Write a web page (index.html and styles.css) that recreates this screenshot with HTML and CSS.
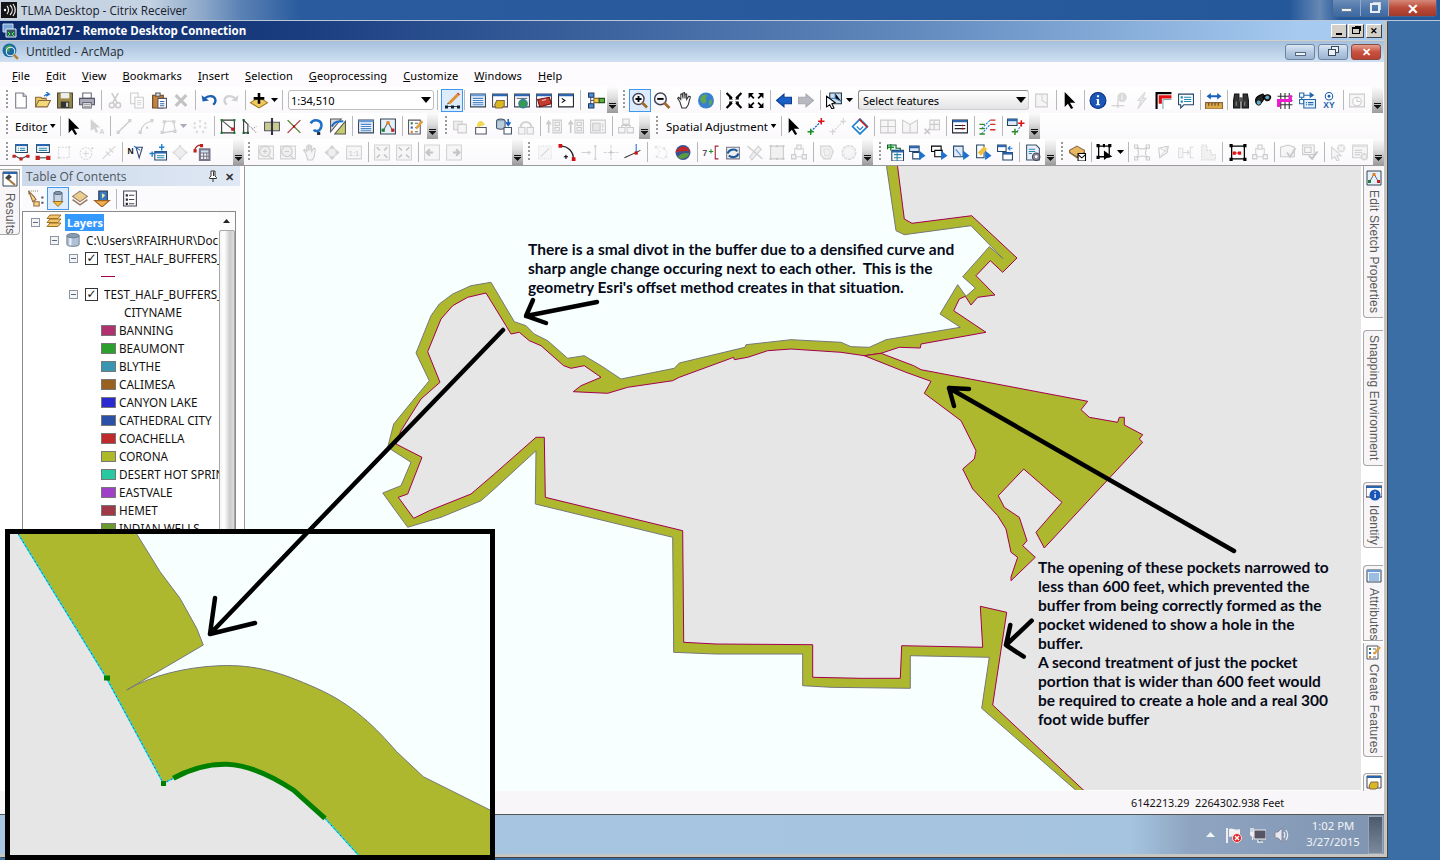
FILE: index.html
```html
<!DOCTYPE html>
<html lang="en">
<head>
<meta charset="utf-8">
<title>TLMA Desktop - Citrix Receiver</title>
<link rel="stylesheet" href="styles.css">
</head>
<body>
<svg class="sprite" aria-hidden="true">
<symbol id="new" viewBox="0 0 16 16"><path d="M3 1h7l3 3v11H3z" fill="#fff" stroke="#778"/><path d="M10 1v3h3" fill="#dde" stroke="#778"/></symbol>
<symbol id="open" viewBox="0 0 16 16"><path d="M1 14V5h5l1 1h4v2" fill="#e8c860" stroke="#864"/><path d="M1 14l3-6h11l-3 6z" fill="#f4d878" stroke="#864"/><path d="M9 4c1-2 3-2 4-2M11 0l3 2-3 2" fill="none" stroke="#27c" stroke-width="1.3"/></symbol>
<symbol id="save" viewBox="0 0 16 16"><path d="M1 1h14v14H1z" fill="#9a8a4a" stroke="#443"/><path d="M4 1h8v5H4z" fill="#eee"/><path d="M4 9h8v6H4z" fill="#333"/><path d="M9 10h2v4H9z" fill="#ccc"/></symbol>
<symbol id="print" viewBox="0 0 16 16"><path d="M4 1h8v5H4z" fill="#fff" stroke="#667"/><path d="M1 6h14v6H1z" fill="#aab" stroke="#556"/><path d="M4 10h8v5H4z" fill="#fff" stroke="#667"/><path d="M5 12h6M5 14h6" stroke="#888"/></symbol>
<symbol id="cut" viewBox="0 0 16 16"><path d="M5 1l5 9M11 1l-5 9" stroke="#889" stroke-width="1.5"/><circle cx="5" cy="12.5" r="2.3" fill="none" stroke="#889" stroke-width="1.4"/><circle cx="11" cy="12.5" r="2.3" fill="none" stroke="#889" stroke-width="1.4"/></symbol>
<symbol id="copy" viewBox="0 0 16 16"><path d="M2 1h7v10H2z" fill="#fff" stroke="#889"/><path d="M6 5h8v10H6z" fill="#fff" stroke="#889"/><path d="M8 8h4M8 10h4M8 12h4" stroke="#aab"/></symbol>
<symbol id="paste" viewBox="0 0 16 16"><path d="M2 3h10v12H2z" fill="#c8803a" stroke="#642"/><path d="M5 1h4v3H5z" fill="#ddd" stroke="#555"/><path d="M7 6h8v9H7z" fill="#fff" stroke="#556"/><path d="M9 9h4M9 11h4M9 13h4" stroke="#36a"/></symbol>
<symbol id="del" viewBox="0 0 16 16"><path d="M3 3l10 10M13 3L3 13" stroke="#778" stroke-width="3"/></symbol>
<symbol id="undo" viewBox="0 0 16 16"><path d="M4 6c3-3 9-3 10 1 .5 2-1 4-2 5" fill="none" stroke="#1d5fb0" stroke-width="2.2"/><path d="M1 3l1 6 6-1z" fill="#1d5fb0"/></symbol>
<symbol id="redo" viewBox="0 0 16 16"><path d="M12 6C9 3 3 3 2 7c-.5 2 1 4 2 5" fill="none" stroke="#99a" stroke-width="2.2"/><path d="M15 3l-1 6-6-1z" fill="#99a"/></symbol>
<symbol id="add" viewBox="0 0 16 16"><path d="M8 5l8 5-8 5-8-5z" fill="#f0c860" stroke="#a07820"/><path d="M8 1v10M3 6h10" stroke="#000" stroke-width="2.4"/></symbol>
<symbol id="sketch" viewBox="0 0 16 16"><path d="M2 14h12" stroke="#345"/><path d="M1 13h3v3H1zM7 13h3v3H7zM13 13h3v3h-3z" fill="#123"/><path d="M5 11L14 2" stroke="#e09030" stroke-width="3"/><path d="M14 2l1-1" stroke="#c33" stroke-width="3"/><path d="M4 10l1 1-2 1z" fill="#333"/></symbol>
<symbol id="table" viewBox="0 0 16 16"><path d="M1 2h14v12H1z" fill="#eef5fc" stroke="#345"/><path d="M1 2h14v2H1z" fill="#6b9bd4"/><path d="M3 6h10M3 8h10M3 10h10M3 12h10" stroke="#4a86c8"/></symbol>
<symbol id="catalog" viewBox="0 0 16 16"><path d="M1 2h14v12H1z" fill="#fff" stroke="#445"/><path d="M1 2h14v2H1z" fill="#2a66b0"/><path d="M5 8h7v5l-2 2H4l-1-3z" fill="#d8b820" stroke="#864"/></symbol>
<symbol id="search" viewBox="0 0 16 16"><path d="M1 2h14v12H1z" fill="#fff" stroke="#445"/><path d="M1 2h14v2H1z" fill="#2a66b0"/><path d="M3 6h10" stroke="#667"/><circle cx="9" cy="11" r="4" fill="#3a9a50" stroke="#27a"/></symbol>
<symbol id="toolbox" viewBox="0 0 16 16"><path d="M1 2h14v12H1z" fill="#fff" stroke="#445"/><path d="M1 2h14v2H1z" fill="#2a66b0"/><path d="M2 7l11-2 2 6-11 3z" fill="#c43c30" stroke="#711"/><path d="M6 8l4-1" stroke="#fcc"/></symbol>
<symbol id="python" viewBox="0 0 16 16"><path d="M1 2h14v12H1z" fill="#fff" stroke="#223"/><path d="M1 2h14v2H1z" fill="#2a66b0"/><path d="M4 6l3 2-3 2" fill="none" stroke="#000"/></symbol>
<symbol id="model" viewBox="0 0 16 16"><path d="M3 4v8M3 8h6M3 4h3M3 12h3M11 8h2" stroke="#557"/><path d="M1 1h5v4H1z" fill="#4a90d8" stroke="#235"/><path d="M1 11h5v4H1z" fill="#4a90d8" stroke="#235"/><path d="M6 6h5v4H6z" fill="#f0d040" stroke="#863"/><path d="M11 6h5v4h-5z" fill="#60b040" stroke="#252"/></symbol>
<symbol id="zoomin" viewBox="0 0 16 16"><circle cx="6.5" cy="6.5" r="5.5" fill="#f4f8fc" stroke="#445" stroke-width="1.4"/><path d="M10 10l5 5" stroke="#a06828" stroke-width="2.6"/><path d="M6.5 3.5v6M3.5 6.5h6" stroke="#000" stroke-width="1.8"/></symbol>
<symbol id="zoomout" viewBox="0 0 16 16"><circle cx="6.5" cy="6.5" r="5.5" fill="#f4f8fc" stroke="#445" stroke-width="1.4"/><path d="M10 10l5 5" stroke="#a06828" stroke-width="2.6"/><path d="M3.5 6.5h6" stroke="#000" stroke-width="1.8"/></symbol>
<symbol id="pan" viewBox="0 0 16 16"><path d="M4 9L2 6l1-1 2 2V2l1.500-.5L7 6V1l1.500-.5L9 6V2l1.500 0V7l2-3 1.500.5L12 12l-2 3H6z" fill="#fff" stroke="#333"/></symbol>
<symbol id="globe" viewBox="0 0 16 16"><circle cx="8" cy="8" r="7.500" fill="#3a80d0"/><path d="M3 5c2-3 5-3 6-2 0 2-2 2-1 4 1 1 0 3-2 4-2-1-4-3-3-6zM11 8l3-1c0 3-1 5-3 6z" fill="#60a848"/></symbol>
<symbol id="fixin" viewBox="0 0 16 16"><path d="M1 1l5 5M15 1l-5 5M1 15l5-5M15 15l-5-5" stroke="#000" stroke-width="2"/><path d="M7 7H3.500V3.500zM9 7h3.500V3.500zM7 9H3.500v3.500zM9 9h3.500v3.500z" fill="#000"/></symbol>
<symbol id="fixout" viewBox="0 0 16 16"><path d="M3 3l3 3M13 3l-3 3M3 13l3-3M13 13l-3-3" stroke="#000" stroke-width="1.600"/><path d="M1 1h5L1 6zM15 1h-5l5 5zM1 15h5l-5-5zM15 15h-5l5-5z" fill="#000"/></symbol>
<symbol id="back" viewBox="0 0 16 16"><path d="M1 8l7-6v3h7v6H8v3z" fill="#1860c8" stroke="#0a3a90"/></symbol>
<symbol id="fwd" viewBox="0 0 16 16"><path d="M15 8L8 2v3H1v6h7v3z" fill="#b8b8c0" stroke="#a8a8b0"/></symbol>
<symbol id="selfeat" viewBox="0 0 16 16"><path d="M4 1h11v10H4z" fill="#cde" stroke="#234"/><path d="M9 1v5l6 3M4 6l5 0" stroke="#4a8ac8"/><path d="M1 4l8 6-3 1 2 4-2 1-2-4-3 2z" fill="#fff" stroke="#000"/></symbol>
<symbol id="poly" viewBox="0 0 16 16"><path d="M2 2h11v12H2z" fill="#eee" stroke="#889"/><path d="M8 2v6l5 3" stroke="#99a" fill="none"/></symbol>
<symbol id="arrow" viewBox="0 0 16 16"><path d="M3 0v14l3-3 3 5 2-1-3-5h5z" fill="#000"/></symbol>
<symbol id="info" viewBox="0 0 16 16"><circle cx="8" cy="8" r="7.500" fill="#1a56b8" stroke="#0d3080"/><path d="M7 3h2v2H7zM6.500 6.500H9v5h1v1H6v-1h1V7.500h-.5z" fill="#fff"/></symbol>
<symbol id="idpt" viewBox="0 0 16 16"><path d="M0 13h12M6 7v8" stroke="#889"/><circle cx="10" cy="5" r="4.500" fill="#aab"/><path d="M9.500 2h1v1h-1zM9.500 4h1v3h-1z" fill="#fff"/></symbol>
<symbol id="bolt" viewBox="0 0 16 16"><path d="M11 0L4 8h3l-3 8 8-10H9z" fill="#c8c8d0" stroke="#aab"/></symbol>
<symbol id="layout" viewBox="0 0 16 16"><path d="M0 0h15v2H2v14H0z" fill="#000"/><path d="M3 3h12v3H6v5H3z" fill="#e01010"/><path d="M7 7h8M7 7v9" stroke="#7ab"/><path d="M8 8h7v8H8z" fill="#fff"/></symbol>
<symbol id="bubble" viewBox="0 0 16 16"><path d="M1 2h14v10H6l-3 3v-3H1z" fill="#fff" stroke="#246"/><path d="M3 4h2v2H3zM3 8h2v2H3z" fill="#28a"/><path d="M6 5h7M6 7h7M6 9h7" stroke="#28a"/></symbol>
<symbol id="measure" viewBox="0 0 16 16"><path d="M0 10h16v6H0z" fill="#d8a848" stroke="#864"/><path d="M3 10v3M6 10v3M9 10v3M12 10v3" stroke="#642"/><path d="M1 4l4-3v2h6V1l4 3-4 3V5H5v2z" fill="#1860b8"/></symbol>
<symbol id="find" viewBox="0 0 16 16"><path d="M2 2h4v4l1 3v6H1V8zM10 2h4l1 6v7H9V9l1-3z" fill="#333" stroke="#111"/><path d="M6 5h4v4H6z" fill="#555"/><path d="M3 9h1v4H3zM11 9h1v4h-1z" fill="#889"/></symbol>
<symbol id="binoc" viewBox="0 0 16 16"><path d="M1 8c0-4 4-5 7-6l2 3-2 3-3 4c-2 1-4-1-4-4zM8 5c2-3 6-3 7-1 1 3-2 5-4 4z" fill="#222" stroke="#000"/><circle cx="4" cy="10" r="2" fill="#6ac"/><circle cx="12" cy="5" r="1.800" fill="#6ac"/></symbol>
<symbol id="grid" viewBox="0 0 16 16"><path d="M1 4h14M1 8h14M1 12h14M4 1v15M8 1v15M12 1v15" stroke="#333"/><path d="M2 14V8h11V3" fill="none" stroke="#f018d0" stroke-width="3"/></symbol>
<symbol id="move" viewBox="0 0 16 16"><path d="M3 3v6M3 3h8M11 1l3 2-3 2z" stroke="#26a" fill="#26a"/><path d="M1 1h4v4H1zM1 7h4v4H1z" fill="#fff" stroke="#26a"/><path d="M5 7h11v8H5z" fill="#e4f0fa" stroke="#26a"/><path d="M7 10h1M9 10h5M7 12h1M9 12h5" stroke="#26a"/></symbol>
<symbol id="xy" viewBox="0 0 16 16"><circle cx="8" cy="4" r="3.500" fill="#fff" stroke="#1a5cb0"/><circle cx="8" cy="4" r="1.300" fill="#1a5cb0"/><text x="8" y="15" text-anchor="middle" font-family="Liberation Sans" font-size="8" font-weight="700" fill="#1a5cb0">XY</text></symbol>
<symbol id="clock" viewBox="0 0 16 16"><path d="M1 2h14v12H1z" fill="#eee" stroke="#889"/><circle cx="8" cy="9" r="4" fill="#fff" stroke="#889"/><path d="M8 6v3h3" stroke="#889" fill="none"/></symbol>
<symbol id="annot" viewBox="0 0 16 16"><path d="M3 1v11l3-2 2 4 2-1-2-4h4z" fill="#99a"/><text x="11" y="15" font-family="Liberation Sans" font-size="7" font-weight="700" fill="#99a">A</text></symbol>
<symbol id="line" viewBox="0 0 16 16"><path d="M3 13L13 3" stroke="#889" stroke-width="1.300"/><path d="M1 12h3v3H1zM12 1h3v3h-3z" fill="#99a"/></symbol>
<symbol id="curve" viewBox="0 0 16 16"><path d="M3 13C4 6 8 4 13 3" stroke="#889" fill="none"/><path d="M1 12h3v3H1zM12 1h3v3h-3zM8 8h2v2H8z" fill="#99a"/></symbol>
<symbol id="polyg" viewBox="0 0 16 16"><path d="M5 3h8l2 9-12 2z" fill="none" stroke="#889"/><path d="M3 2h3v3H3zM12 2h3v3h-3zM1 12h3v3H1zM13 11h3v3h-3z" fill="#99a"/></symbol>
<symbol id="verts" viewBox="0 0 16 16"><path d="M2 4h2v2H2zM7 2h2v2H7zM12 4h2v2h-2zM2 8h2v2H2zM7 7h2v2H7zM12 8h2v2h-2zM4 12h2v2H4zM10 12h2v2h-2z" fill="#aab"/></symbol>
<symbol id="snapa" viewBox="0 0 16 16"><path d="M2 2h12v12H2z" fill="none" stroke="#333"/><path d="M2 2l12 10" stroke="#555"/><path d="M1 1h2v2H1zM13 1h2v2h-2zM1 13h2v2H1zM13 13h2v2h-2z" fill="#1a8030"/><path d="M11 9h3v3h-3z" fill="#c02020"/></symbol>
<symbol id="snapb" viewBox="0 0 16 16"><path d="M2 2l4 4v8H2z" fill="none" stroke="#333"/><path d="M6 6l8 8M6 6h2M10 10l4-2" stroke="#999" stroke-dasharray="1 1"/><path d="M1 1h2v2H1zM1 13h2v2H1zM5 13h2v2H5z" fill="#1a6030"/></symbol>
<symbol id="split" viewBox="0 0 16 16"><path d="M1 4h14v8H1z" fill="#c8cc90" stroke="#556"/><path d="M8 0v16" stroke="#334" stroke-width="2"/></symbol>
<symbol id="cross" viewBox="0 0 16 16"><path d="M2 2l12 12" stroke="#5a8030" stroke-width="1.300"/><path d="M14 2L2 14" stroke="#b04040" stroke-width="1.300"/><path d="M7 7h2v2H7z" fill="#c00"/></symbol>
<symbol id="rotate" viewBox="0 0 16 16"><path d="M3 5c3-5 11-3 10 3-1 5-6 5-7 3" fill="none" stroke="#1c70c8" stroke-width="2.400"/><path d="M9 13h3v3H9z" fill="#234"/></symbol>
<symbol id="trace" viewBox="0 0 16 16"><path d="M1 1h10L1 13z" fill="#ddd" stroke="#555"/><path d="M15 15H5l10-12z" fill="#c8cc70" stroke="#555"/><path d="M2 8c3-5 6-5 11-5" stroke="#1c70c8" stroke-width="2" fill="none"/></symbol>
<symbol id="sprops" viewBox="0 0 16 16"><path d="M1 1h14v14H1z" fill="#e6f0fa" stroke="#345"/><path d="M4 11L8 4l4 7" fill="none" stroke="#666"/><path d="M6.500 3h3v3h-3z" fill="#e08020"/><path d="M2 10h3v3H2z" fill="#1a8030"/><path d="M11 10h3v3h-3z" fill="#c02020"/></symbol>
<symbol id="create" viewBox="0 0 16 16"><path d="M1 2h11v13H1z" fill="#fff" stroke="#556"/><path d="M3 4h2v2H3z" fill="#2a8040"/><path d="M3 8h2v2H3z" fill="#2a60b0"/><path d="M3 12h2v2H3z" fill="#d08020"/><path d="M7 5h3M7 9h3M7 13h3" stroke="#666"/><path d="M8 10l6-7" stroke="#e0a040" stroke-width="2.400"/></symbol>
<symbol id="gbox" viewBox="0 0 16 16"><path d="M2 3h8v8H2z" fill="#ddd" stroke="#889"/><path d="M6 6h8v8H6z" fill="#eee" stroke="#889"/></symbol>
<symbol id="ystar" viewBox="0 0 16 16"><path d="M2 9h10v6H2z" fill="#fff" stroke="#556"/><path d="M4 9c-2-3 1-7 4-6l3 3z" fill="#f0d850"/></symbol>
<symbol id="dbadd" viewBox="0 0 16 16"><ellipse cx="5" cy="3" rx="4" ry="2" fill="#8ab" stroke="#456"/><path d="M1 3v6c0 2 8 2 8 0V3" fill="#bcd" stroke="#456"/><path d="M8 9h7v6H8z" fill="#fff" stroke="#456"/><path d="M12 1v5M10 4l2 3 2-3" stroke="#1c60c0" fill="none" stroke-width="1.500"/></symbol>
<symbol id="g2" viewBox="0 0 16 16"><path d="M1 9h6v6H1zM9 9h6v6H9z" fill="#eee" stroke="#889"/><path d="M3 9c0-7 10-7 10 0" fill="none" stroke="#99a" stroke-width="2"/></symbol>
<symbol id="g3" viewBox="0 0 16 16"><path d="M7 2h8v12H7z" fill="#eee" stroke="#889"/><path d="M3 14V3M1 6l2-3 2 3" stroke="#889" fill="none" stroke-width="1.600"/><path d="M9 4h4v3H9zM9 9h4v3H9z" fill="none" stroke="#889"/></symbol>
<symbol id="g4" viewBox="0 0 16 16"><path d="M1 2h14v12H1z" fill="#eee" stroke="#889"/><path d="M3 5h7v7H3z" fill="#ccc" stroke="#889"/><path d="M12 5h1v4h-1zM12 10h1v2h-1z" fill="#889"/></symbol>
<symbol id="g5" viewBox="0 0 16 16"><path d="M5 1h6v5H5zM1 9h6v5H1zM9 9h6v5H9z" fill="#eee" stroke="#889"/><path d="M8 6v3M4 9V7h8v2" stroke="#889" fill="none"/></symbol>
<symbol id="adjust" viewBox="0 0 16 16"><path d="M3 13L13 3" stroke="#1c70d0" stroke-width="1.200" stroke-dasharray="2 1"/><path d="M0 13h6M3 10v6" stroke="#1a9020" stroke-width="1.400"/><path d="M10 3h6M13 0v6" stroke="#e01010" stroke-width="1.400"/></symbol>
<symbol id="adj2" viewBox="0 0 16 16"><path d="M3 13L13 3" stroke="#99a" stroke-dasharray="2 1"/><path d="M0 13h6M3 10v6M10 3h6M13 0v6" stroke="#99a"/></symbol>
<symbol id="adj3" viewBox="0 0 16 16"><path d="M1 8l7-7 7 7-7 7z" fill="#fff" stroke="#1c80d0" stroke-width="1.600"/><path d="M7 1l8 8" stroke="#e01010" stroke-width="1.400"/><path d="M5 8l3 3 3-3" stroke="#1c80d0" fill="none"/></symbol>
<symbol id="win4" viewBox="0 0 16 16"><path d="M1 2h14v12H1zM8 2v12M1 8h14" fill="#eee" stroke="#889"/></symbol>
<symbol id="win5" viewBox="0 0 16 16"><path d="M1 2l7 4 7-4v12H1zM8 6v8" fill="#eee" stroke="#889"/></symbol>
<symbol id="win6" viewBox="0 0 16 16"><path d="M6 2h9v9H6zM10 2v9M6 6h9" fill="#eee" stroke="#889"/><path d="M1 10l5 5M6 10l-5 5" stroke="#889" stroke-width="1.600"/></symbol>
<symbol id="attrs" viewBox="0 0 16 16"><path d="M1 2h14v12H1z" fill="#fff" stroke="#223"/><path d="M1 2h14v2H1z" fill="#2a66b0"/><path d="M3 7h10M3 10h10" stroke="#223"/><path d="M10 6l2 1-2 1zM10 9l2 1-2 1z" fill="#c00"/></symbol>
<symbol id="lines3" viewBox="0 0 16 16"><path d="M2 15l8-9M2 10l8-8" stroke="#1c80d0" stroke-dasharray="2 1"/><path d="M10 2h5M10 6h5M10 11h5" stroke="#d03020" stroke-width="1.400"/><path d="M0 6h5M0 10h5M0 15h5" stroke="#2a8a20" stroke-width="1.400"/></symbol>
<symbol id="plusw" viewBox="0 0 16 16"><path d="M0 1h9v6H0z" fill="#dfeafa" stroke="#245"/><path d="M0 1h9v2H0z" fill="#2a66b0"/><path d="M9 13L13 6" stroke="#1c80d0" stroke-dasharray="2 1"/><path d="M10 5h6M13 2v6" stroke="#e01010" stroke-width="1.400"/><path d="M4 13h6M7 10v6" stroke="#2a8a20" stroke-width="1.400"/></symbol>
<symbol id="tline" viewBox="0 0 16 16"><path d="M3 0h11v8H3z" fill="#fff" stroke="#246"/><path d="M3 0h11v2H3z" fill="#2a66b0"/><path d="M5 4h1M7 4h5M5 6h1M7 6h5" stroke="#28a"/><path d="M2 11l6 3 6-3" stroke="#444" fill="none"/><path d="M0 10h3v3H0zM6.500 12.500h3v3h-3zM13 10h3v3h-3z" fill="#c02020"/></symbol>
<symbol id="ttwo" viewBox="0 0 16 16"><path d="M2 0h12v8H2z" fill="#fff" stroke="#246"/><path d="M2 0h12v2H2z" fill="#2a66b0"/><path d="M4 4h8M4 6h8" stroke="#28a"/><path d="M3 13h10" stroke="#444"/><path d="M1 11h4v4H1zM11 11h4v4h-4z" fill="#c02020"/></symbol>
<symbol id="g6" viewBox="0 0 16 16"><path d="M2 3h10v10H2z" fill="none" stroke="#aab" stroke-dasharray="2 1"/><path d="M11 2h2v2h-2zM1 12h2v2H1z" fill="#aab"/></symbol>
<symbol id="g7" viewBox="0 0 16 16"><circle cx="7" cy="9" r="5.500" fill="none" stroke="#aab" stroke-dasharray="2 1"/><path d="M7 6v6M4 9h6" stroke="#aab"/><path d="M12 3h2v2h-2z" fill="#aab"/></symbol>
<symbol id="g8" viewBox="0 0 16 16"><path d="M2 14L14 2M5 7l4 4M8 4l4 4" stroke="#aab" stroke-width="1.200"/></symbol>
<symbol id="north" viewBox="0 0 16 16"><text x="0" y="9" font-family="Liberation Sans" font-size="8" font-weight="700" fill="#111">N</text><path d="M8 3h6l-3 10z" fill="#fff" stroke="#346"/><path d="M6 2l6 4" stroke="#1c70c8"/></symbol>
<symbol id="addt" viewBox="0 0 16 16"><path d="M5 7h11v8H5z" fill="#fff" stroke="#246"/><path d="M5 7h11v2H5z" fill="#2a66b0"/><path d="M7 11h7M7 13h7" stroke="#28a"/><path d="M0 9h5M2.500 7v5M9 3h5M11.500 0v6" stroke="#1c80d0" stroke-width="1.300"/></symbol>
<symbol id="dia" viewBox="0 0 16 16"><path d="M8 2l6 6-6 6-6-6z" fill="#ddd" stroke="#aab"/><path d="M7 1h2v2H7zM1 7h2v2H1zM13 7h2v2h-2zM7 13h2v2H7z" fill="#aab"/></symbol>
<symbol id="calc" viewBox="0 0 16 16"><path d="M1 6c1-4 3-5 6-5" fill="none" stroke="#b02020" stroke-width="1.200"/><path d="M0 5h3v3H0zM6 0h3v3H6z" fill="#c02020"/><path d="M5 4h11v12H5z" fill="#778"/><path d="M7 6h7v2H7z" fill="#cde"/><path d="M7 9h2v2H7zM10 9h2v2h-2zM13 9h1v2h-1zM7 12h2v2H7zM10 12h2v2h-2zM13 12h1v2h-1z" fill="#eee"/></symbol>
<symbol id="zb1" viewBox="0 0 16 16"><path d="M1 2h14v12H1z" fill="#eee" stroke="#99a"/><circle cx="7" cy="7" r="5" fill="#ddd" stroke="#889"/><path d="M7 5v4M5 7h4M10 11l4 3" stroke="#889"/></symbol>
<symbol id="zb2" viewBox="0 0 16 16"><path d="M1 2h14v12H1z" fill="#eee" stroke="#99a"/><circle cx="7" cy="7" r="5" fill="#ddd" stroke="#889"/><path d="M5 7h4M10 11l4 3" stroke="#889"/></symbol>
<symbol id="zb3" viewBox="0 0 16 16"><path d="M4 9L2 6l1-1 2 2V2h1.500v4V1H8v5V2h1.500v5l2-3 1.500.5L12 12l-2 3H6z" fill="#eee" stroke="#889"/></symbol>
<symbol id="zb4" viewBox="0 0 16 16"><path d="M8 1l3 3H5zM8 15l3-3H5zM1 8l3-3v6zM15 8l-3-3v6z" fill="#99a"/><circle cx="8" cy="8" r="4" fill="#ddd" stroke="#99a"/></symbol>
<symbol id="zb5" viewBox="0 0 16 16"><path d="M1 2h14v12H1z" fill="#eee" stroke="#99a"/><text x="8" y="11" text-anchor="middle" font-family="Liberation Sans" font-size="7" fill="#778">1:1</text></symbol>
<symbol id="zb6" viewBox="0 0 16 16"><path d="M1 1h14v14H1z" fill="#eee" stroke="#99a"/><path d="M3 3l3 3M13 3l-3 3M3 13l3-3M13 13l-3-3" stroke="#778" stroke-width="1.400"/></symbol>
<symbol id="zb7" viewBox="0 0 16 16"><path d="M1 1h14v14H1z" fill="#eee" stroke="#99a"/><path d="M9 8H3M6 5L3 8l3 3" stroke="#778" stroke-width="2" fill="none"/></symbol>
<symbol id="zb8" viewBox="0 0 16 16"><path d="M1 1h14v14H1z" fill="#eee" stroke="#99a"/><path d="M7 8h6M10 5l3 3-3 3" stroke="#778" stroke-width="2" fill="none"/></symbol>
<symbol id="eb1" viewBox="0 0 16 16"><path d="M2 2h12v12H2z" fill="#f2f2f2" stroke="#bbc" stroke-dasharray="1 1"/><path d="M4 12l8-8" stroke="#aab"/></symbol>
<symbol id="ecurve" viewBox="0 0 16 16"><path d="M2 2c7 0 12 5 12 12" stroke="#222" fill="none" stroke-width="1.300"/><path d="M0 0h3.500v3.500H0zM12.500 12.500H16V16h-3.500z" fill="#d01010"/><path d="M5 12h4M7 10v4" stroke="#000"/></symbol>
<symbol id="e3" viewBox="0 0 16 16"><path d="M1 8h8M14 2v12" stroke="#99a"/><path d="M7 6l3 2-3 2z" fill="#99a"/><path d="M13 1h2v2h-2zM13 13h2v2h-2z" fill="#99a"/></symbol>
<symbol id="e4" viewBox="0 0 16 16"><path d="M8 1v14M1 8h14" stroke="#99a" stroke-dasharray="3 1"/><path d="M7 7h2v2H7z" fill="#778"/></symbol>
<symbol id="eline" viewBox="0 0 16 16"><path d="M0 13l15-7" stroke="#333"/><path d="M11 0v8" stroke="#1c70d0"/><path d="M9.500 7h3v3h-3z" fill="#d01010"/></symbol>
<symbol id="e5" viewBox="0 0 16 16"><path d="M3 2l4 5-3 5 7 2 3-7-6-4z" fill="none" stroke="#bbc" stroke-dasharray="1 1"/><path d="M2 2h2v2H2zM10 3h2v2h-2zM3 11h2v2H3zM12 11h2v2h-2z" fill="#bbc"/></symbol>
<symbol id="ball" viewBox="0 0 16 16"><circle cx="8" cy="8" r="7" fill="#3a5090"/><path d="M1 8C3 2 11 0 15 7 11 6 4 7 1 8z" fill="#c02828"/><path d="M3 12c4-4 8-4 11-3-1 4-8 7-11 3z" fill="#5a9a40"/></symbol>
<symbol id="hist" viewBox="0 0 16 16"><text x="0" y="11" font-family="Liberation Sans" font-size="8" font-weight="700" fill="#555">7</text><path d="M6 7h4M8 5v4" stroke="#1a9020"/><path d="M15 2h-3v12h3" stroke="#a02030" fill="none"/></symbol>
<symbol id="redraw" viewBox="0 0 16 16"><path d="M2 3h12v11H2z" fill="#eee" stroke="#778"/><path d="M3 9c1-4 7-5 9-2M13 9c-1 4-6 4-9 2" stroke="#1c5a9c" stroke-width="2" fill="none"/></symbol>
<symbol id="e6" viewBox="0 0 16 16"><path d="M3 12L11 2l3 3-9 10z" fill="#ddd" stroke="#99a"/><path d="M1 2l14 12" stroke="#99a" stroke-width="1.400"/></symbol>
<symbol id="e7" viewBox="0 0 16 16"><path d="M2 2h12v12H2z" fill="#e4e4e4" stroke="#889"/><path d="M1 1h2v2H1zM13 1h2v2h-2zM1 13h2v2H1zM13 13h2v2h-2zM7 1h2v2H7zM7 13h2v2H7z" fill="#889"/></symbol>
<symbol id="e8" viewBox="0 0 16 16"><path d="M4 4h8v8H4z" fill="none" stroke="#99a"/><path d="M6 1h4v4H6zM1 10h4v4H1zM11 10h4v4h-4z" fill="#eee" stroke="#889"/></symbol>
<symbol id="e9" viewBox="0 0 16 16"><path d="M2 2h9l3 5-3 7H5l-3-4z" fill="#e4e4e4" stroke="#99a"/><path d="M5 5h5l1 3-1 3H6z" fill="none" stroke="#bbb"/></symbol>
<symbol id="e10" viewBox="0 0 16 16"><circle cx="8" cy="8" r="6.500" fill="#e4e4e4" stroke="#99a" stroke-dasharray="3 1"/><circle cx="8" cy="8" r="4" fill="#eee"/></symbol>
<symbol id="b1" viewBox="0 0 16 16"><path d="M1 5V1h8v3h4v3" fill="#dfe" stroke="#153"/><path d="M5 6h11v10H5z" fill="#fff" stroke="#246"/><path d="M5 6h11v2H5z" fill="#2a66b0"/><path d="M7 10h7M7 13h7M10 8v8" stroke="#28a"/><path d="M1 3h6M4 0v6" stroke="#1a9020" stroke-width="1.300"/></symbol>
<symbol id="b2" viewBox="0 0 16 16"><path d="M1 2h9v5H1z" fill="#dfeafa" stroke="#246"/><path d="M1 2h9v2H1z" fill="#2a66b0"/><path d="M4 8h7v6H4z" fill="#fff" stroke="#246"/><path d="M10 6l6 5-6 4z" fill="#1c70d0"/></symbol>
<symbol id="b3" viewBox="0 0 16 16"><path d="M1 2h9v5H1z" fill="#fff" stroke="#000"/><path d="M4 6h7v6H4z" fill="#fff" stroke="#000"/><path d="M10 6l6 5-6 4z" fill="#1c70d0"/></symbol>
<symbol id="b4" viewBox="0 0 16 16"><path d="M1 2h9v10H1z" fill="#dfeafa" stroke="#246"/><path d="M3 5l5 6" stroke="#4a8ac8"/><path d="M10 6l6 5-6 4z" fill="#1c70d0"/></symbol>
<symbol id="b5" viewBox="0 0 16 16"><path d="M2 1h7v12H2z" fill="#fff" stroke="#246"/><path d="M3 8l6-6 3 3-6 6z" fill="#f0c040"/><path d="M10 6l6 5-6 4z" fill="#1c70d0"/></symbol>
<symbol id="b6" viewBox="0 0 16 16"><path d="M1 1h8v6H1z" fill="#fff" stroke="#246"/><path d="M1 1h8v2H1z" fill="#2a66b0"/><path d="M6 8h9v7H6z" fill="#fff" stroke="#246"/><path d="M6 8h9v2H6z" fill="#2a66b0"/><path d="M15 4H11M13 2l-2 2 2 2" stroke="#1c70d0" fill="none"/></symbol>
<symbol id="b7" viewBox="0 0 16 16"><path d="M2 1h9l3 3v11H2z" fill="#eef" stroke="#356"/><path d="M4 5h6M4 7h6M4 9h3" stroke="#28a"/><circle cx="11" cy="12" r="3.500" fill="#889" stroke="#445"/><circle cx="11" cy="12" r="1.300" fill="#fff"/></symbol>
<symbol id="stack" viewBox="0 0 16 16"><path d="M8 2l7 4v2l-7 5-7-5V6z" fill="#e8b860" stroke="#864"/><path d="M1 8l7 4 7-4" fill="none" stroke="#864"/><path d="M9 9h7v7H9z" fill="#fff" stroke="#000"/><path d="M9 10l3.500 3 3.500-3" stroke="#000" fill="none"/></symbol>
<symbol id="nodes" viewBox="0 0 16 16"><path d="M2 2h10v10H2z" fill="none" stroke="#000" stroke-width="1.200"/><path d="M0 0h3v3H0zM11 0h3v3h-3zM0 11h3v3H0zM6 0h2v3H6z" fill="#000"/><path d="M7 6v9l3-2 5-1z" fill="#000"/></symbol>
<symbol id="rnodes" viewBox="0 0 16 16"><path d="M2 2h12v12H2z" fill="none" stroke="#000" stroke-width="1.200"/><path d="M0 0h3v3H0zM13 0h3v3h-3zM0 13h3v3H0zM13 13h3v3h-3z" fill="#000"/><path d="M3 7h3v3H3zM8 7h3v3H8z" fill="#e01010"/><path d="M6 8.500h2" stroke="#e01010"/></symbol>
<symbol id="g9" viewBox="0 0 16 16"><path d="M3 3c3 2 7 2 10 0-2 3-2 7 0 10-3-2-7-2-10 0 2-3 2-7 0-10z" fill="none" stroke="#889"/><path d="M1 1h3v3H1zM12 1h3v3h-3zM1 12h3v3H1zM12 12h3v3h-3z" fill="none" stroke="#889"/></symbol>
<symbol id="g10" viewBox="0 0 16 16"><path d="M3 4l9-2-1 6-7 5z" fill="none" stroke="#889"/><path d="M4 4l8 4M12 2L4 13" stroke="#aab"/></symbol>
<symbol id="g11" viewBox="0 0 16 16"><path d="M1 4h4v9H1z" fill="#eee" stroke="#bbb"/><path d="M5 8h6M9 6l2 2-2 2" stroke="#aab" fill="none"/><path d="M15 3h-3v10h3" fill="none" stroke="#aab"/></symbol>
<symbol id="g12" viewBox="0 0 16 16"><path d="M2 1h5v5h4v4h4v5H2z" fill="#e4e4e4" stroke="#aab" stroke-dasharray="2 1"/></symbol>
<symbol id="g13" viewBox="0 0 16 16"><path d="M1 3l7-2 6 2v9H1z" fill="#eee" stroke="#889"/><path d="M7 8l3 4 5-8" fill="none" stroke="#889" stroke-width="1.800"/></symbol>
<symbol id="g14" viewBox="0 0 16 16"><path d="M1 1h11v9H1z" fill="#eee" stroke="#889"/><path d="M3 3h6v5H3z" fill="none" stroke="#889"/><path d="M7 11l3 3 5-7" fill="none" stroke="#778" stroke-width="1.800"/></symbol>
<symbol id="g15" viewBox="0 0 16 16"><path d="M2 3v11l3-2 2 4 2-1-2-4h4z" fill="#eee" stroke="#99a"/><circle cx="11" cy="4" r="4" fill="#bbb"/><path d="M9 2l4 4M13 2l-4 4" stroke="#fff" stroke-width="1.300"/></symbol>
<symbol id="g16" viewBox="0 0 16 16"><path d="M1 1h14v12H1z" fill="#eee" stroke="#99a"/><path d="M1 1h14v2H1z" fill="#bbb"/><path d="M3 6h7M3 8h7M3 10h5" stroke="#99a"/><circle cx="12" cy="12" r="3.500" fill="#aaa"/><path d="M10.500 10.500l3 3M13.500 10.500l-3 3" stroke="#fff"/></symbol>
<symbol id="layers" viewBox="0 0 16 16"><path d="M4 1h11l-3 3.500H1z" fill="#f2c66c" stroke="#a07020"/><path d="M4 5h11l-3 3.500H1z" fill="#f2c66c" stroke="#a07020"/><path d="M4 9h11l-3 3.500H1z" fill="#f2c66c" stroke="#a07020"/></symbol>
<symbol id="db" viewBox="0 0 16 16"><path d="M1 3v10c0 3 14 3 14 0V3z" fill="#b0c0d4" stroke="#678"/><ellipse cx="8" cy="3" rx="7" ry="2.500" fill="#889ab0" stroke="#678"/><path d="M5 6v8" stroke="#e8f0f8" stroke-width="2.500"/></symbol>
<symbol id="tocsel" viewBox="0 0 16 16"><path d="M1 1h9M1 1v4" stroke="#886" stroke-dasharray="1 1"/><path d="M1 1l5 5 2 3-3 2z" fill="#f0d880" stroke="#964"/><path d="M6 11h5v4H6z" fill="#f0d880" stroke="#964"/><path d="M13 6h2v2h-2zM13 11h2v2h-2z" fill="#556"/></symbol>
<symbol id="tocdb" viewBox="0 0 16 16"><path d="M4 2v8c0 2 8 2 8 0V2z" fill="#c8d4e4" stroke="#567"/><ellipse cx="8" cy="2.500" rx="4" ry="1.500" fill="#889ab0" stroke="#567"/><path d="M3 11h10l-5 5z" fill="#eebb44" stroke="#a07020"/></symbol>
<symbol id="toclay" viewBox="0 0 16 16"><path d="M8 1l7 5-7 5-7-5z" fill="#e8cf90" stroke="#976"/><path d="M1 9l7 5 7-5" fill="none" stroke="#976" stroke-width="1.500"/></symbol>
<symbol id="tocvis" viewBox="0 0 16 16"><path d="M5 1h8v9H5z" fill="#3a7ac0" stroke="#234"/><path d="M8 3l3 2-3 3z" fill="#e8f0a0"/><path d="M1 10h14l-7 6z" fill="#f0b050" stroke="#a06020"/></symbol>
<symbol id="toclist" viewBox="0 0 16 16"><path d="M2 1h12v14H2z" fill="#fff" stroke="#445"/><path d="M4 4h2v2H4zM4 8h2v2H4zM4 12h2v2H4z" fill="#223"/><path d="M7 5h5M7 9h5M7 13h5" stroke="#445"/></symbol>
<symbol id="results" viewBox="0 0 16 16"><path d="M1 1h14v14H1z" fill="#fff" stroke="#345"/><path d="M1 1h14v2H1z" fill="#2a66b0"/><path d="M6 8l7 6" stroke="#a8743a" stroke-width="2"/><path d="M3 7l4-4 3 3-4 3z" fill="#444"/></symbol>
<symbol id="identw" viewBox="0 0 16 16"><path d="M0 1h16v11H0z" fill="#fff" stroke="#223"/><path d="M0 1h16v2H0z" fill="#2a66b0"/><circle cx="9" cy="10" r="5.500" fill="#1a56b8"/><path d="M8.500 6.500h1.200v1.500H8.500zM8.500 9h1.200v4H8.500z" fill="#fff"/></symbol>
<symbol id="pin" viewBox="0 0 10 12"><path d="M3 1h4v5l1.500 1.500v1h-7v-1L3 6z" fill="#fff" stroke="#333"/><path d="M5 8.500V12" stroke="#333"/><path d="M5.500 1.500v4.500" stroke="#333"/></symbol>
<symbol id="flag" viewBox="0 0 16 16"><path d="M1 1v15" stroke="#eee" stroke-width="2"/><path d="M3 2c3-2 6 2 11 0v8c-4 2-7-2-11 0z" fill="#f0f0f0"/><circle cx="11" cy="11" r="4.500" fill="#e02828" stroke="#fff" stroke-width=".8"/><path d="M9 9l4 4M13 9l-4 4" stroke="#fff" stroke-width="1.400"/></symbol>
<symbol id="net" viewBox="0 0 16 16"><path d="M4 3h12v9H4z" fill="#556" stroke="#eee"/><path d="M8 13v2h5M1 1v5M3 1v5" stroke="#eee" stroke-width="1.400"/><path d="M0 5h4v3l-1 2v3H2v-3L0 8z" fill="#eee"/></symbol>
<symbol id="spk" viewBox="0 0 16 16"><path d="M1 5h3l4-4v14l-4-4H1z" fill="#e8e8f0" stroke="#889"/><path d="M10 5c1 2 1 4 0 6M12 3c2 3 2 7 0 10" fill="none" stroke="#eee" stroke-width="1.200"/></symbol>
<symbol id="rdp" viewBox="0 0 16 16"><path d="M1 1h10v8H1z" fill="#7aa4d8" stroke="#cde"/><path d="M4 6h10v8H4z" fill="#356" stroke="#def"/><path d="M6 9l2 2-2 2M12 9l-2 2 2 2" stroke="#4f4" fill="none"/></symbol>
<symbol id="cit" viewBox="0 0 16 16"><path d="M0 0h16v16H0z" fill="#141414" rx="2"/><circle cx="4" cy="8" r="1.200" fill="#fff"/><path d="M6 4c2 2 2 6 0 8M9 3c3 3 3 7 0 10M12 2c3 4 3 8 0 12" fill="none" stroke="#eee" stroke-width="1.200"/></symbol>
<symbol id="arcm" viewBox="0 0 16 16"><circle cx="7" cy="7" r="6.500" fill="#1a6aa0"/><path d="M3 4c3-3 6-2 6-1 0 3-3 2-2 5-2 1-4-1-4-4z" fill="#4aa050"/><circle cx="8" cy="8" r="4" fill="none" stroke="#def"/><path d="M11 11l4 4" stroke="#b88030" stroke-width="2.400"/></symbol>
</svg>

<div class="desk">
  <header class="citrix">
    <svg class="tico"><use href="#cit"/></svg>
    <span class="citrix-t">TLMA Desktop - Citrix Receiver</span>
    <div class="citrix-btns">
      <span class="cb"><i class="cb-min"></i></span>
      <span class="cb"><i class="cb-max"></i></span>
      <span class="cb cb-close">&#10005;</span>
    </div>
  </header>

  <div class="rdp">
    <div class="rdp-bar">
      <svg class="tico"><use href="#rdp"/></svg>
      <span class="rdp-t">tlma0217 - Remote Desktop Connection</span>
      <div class="rdp-btns">
        <span class="rb"><i class="rb-min"></i></span>
        <span class="rb"><i class="rb-max"></i></span>
        <span class="rb rb-x">&#10005;</span>
      </div>
    </div>

    <div class="arc-bar">
      <svg class="tico arc-ico"><use href="#arcm"/></svg>
      <span class="arc-t">Untitled - ArcMap</span>
      <div class="arc-btns">
        <span class="ab"><i class="ab-min"></i></span>
        <span class="ab"><i class="ab-max"></i></span>
        <span class="ab ab-x">&#10005;</span>
      </div>
    </div>

    <nav class="menu">
      <span><u>F</u>ile</span><span><u>E</u>dit</span><span><u>V</u>iew</span><span><u>B</u>ookmarks</span><span><u>I</u>nsert</span><span><u>S</u>election</span><span><u>G</u>eoprocessing</span><span><u>C</u>ustomize</span><span><u>W</u>indows</span><span><u>H</u>elp</span>
    </nav>

    <div class="tb">
      <i class="grip"></i>
      <svg class="i"><use href="#new"/></svg><svg class="i"><use href="#open"/></svg><svg class="i"><use href="#save"/></svg><svg class="i"><use href="#print"/></svg><i class="sep"></i>
      <svg class="i d"><use href="#cut"/></svg><svg class="i d"><use href="#copy"/></svg><svg class="i"><use href="#paste"/></svg><svg class="i d"><use href="#del"/></svg><i class="sep"></i>
      <svg class="i"><use href="#undo"/></svg><svg class="i d"><use href="#redo"/></svg><i class="sep"></i>
      <svg class="i"><use href="#add"/></svg><i class="caret"></i><i class="sep"></i>
      <div class="combo m3 scale">1:34,510<i class="cdrop"></i></div><i class="sep"></i>
      <svg class="i a m1"><use href="#sketch"/></svg><i class="sep s5"></i>
      <svg class="i"><use href="#table"/></svg><svg class="i"><use href="#catalog"/></svg><svg class="i"><use href="#search"/></svg><svg class="i"><use href="#toolbox"/></svg><svg class="i"><use href="#python"/></svg><i class="sep"></i>
      <svg class="i m2"><use href="#model"/></svg><i class="dd"></i><i class="grip m3"></i>
      <svg class="i a m2"><use href="#zoomin"/></svg><svg class="i"><use href="#zoomout"/></svg><svg class="i"><use href="#pan"/></svg><svg class="i"><use href="#globe"/></svg><i class="sep"></i>
      <svg class="i"><use href="#fixin"/></svg><svg class="i"><use href="#fixout"/></svg><i class="sep"></i>
      <svg class="i"><use href="#back"/></svg><svg class="i"><use href="#fwd"/></svg><i class="sep"></i>
      <svg class="i"><use href="#selfeat"/></svg><i class="caret"></i>
      <div class="combo sel m4">Select features<i class="cdrop"></i></div>
      <svg class="i d m2"><use href="#poly"/></svg><i class="sep"></i>
      <svg class="i"><use href="#arrow"/></svg><i class="sep"></i>
      <svg class="i"><use href="#info"/></svg><svg class="i d"><use href="#idpt"/></svg><svg class="i d"><use href="#bolt"/></svg><svg class="i"><use href="#layout"/></svg><svg class="i"><use href="#bubble"/></svg><i class="sep"></i>
      <svg class="i"><use href="#measure"/></svg><i class="sep s5"></i>
      <svg class="i"><use href="#find"/></svg><svg class="i"><use href="#binoc"/></svg><svg class="i"><use href="#grid"/></svg><svg class="i"><use href="#move"/></svg><svg class="i"><use href="#xy"/></svg><i class="sep"></i>
      <svg class="i d"><use href="#clock"/></svg><i class="dd m4"></i>
    </div>

    <div class="tb">
      <i class="grip"></i>
      <span class="tb-text editor">Edito<u>r</u><i class="caret"></i></span><i class="sep"></i>
      <svg class="i"><use href="#arrow"/></svg><svg class="i d"><use href="#annot"/></svg><i class="sep"></i>
      <svg class="i d"><use href="#line"/></svg><svg class="i d"><use href="#curve"/></svg><svg class="i d"><use href="#polyg"/></svg><i class="caret g"></i><svg class="i d m1"><use href="#verts"/></svg><i class="sep"></i>
      <svg class="i"><use href="#snapa"/></svg><svg class="i"><use href="#snapb"/></svg><svg class="i"><use href="#split"/></svg><svg class="i"><use href="#cross"/></svg><svg class="i"><use href="#rotate"/></svg><svg class="i"><use href="#trace"/></svg><i class="sep"></i>
      <svg class="i"><use href="#table"/></svg><svg class="i"><use href="#sprops"/></svg><i class="sep"></i>
      <svg class="i"><use href="#create"/></svg><i class="dd"></i><i class="grip m5"></i>
      <svg class="i d"><use href="#gbox"/></svg><svg class="i"><use href="#ystar"/></svg><svg class="i"><use href="#dbadd"/></svg><svg class="i d"><use href="#g2"/></svg><i class="sep"></i>
      <svg class="i d"><use href="#g3"/></svg><svg class="i d"><use href="#g3"/></svg><svg class="i d"><use href="#g4"/></svg><i class="sep"></i>
      <svg class="i d"><use href="#g5"/></svg><i class="dd m2"></i><i class="grip m4"></i>
      <span class="tb-text spatial">Spatial Adjustment<i class="caret"></i></span><i class="sep s4"></i>
      <svg class="i"><use href="#arrow"/></svg><svg class="i"><use href="#adjust"/></svg><svg class="i d"><use href="#adj2"/></svg><svg class="i"><use href="#adj3"/></svg><i class="sep"></i>
      <svg class="i d"><use href="#win4"/></svg><svg class="i d"><use href="#win5"/></svg><svg class="i d"><use href="#win6"/></svg><i class="sep"></i>
      <svg class="i"><use href="#attrs"/></svg><i class="sep"></i>
      <svg class="i"><use href="#lines3"/></svg><i class="sep"></i>
      <svg class="i"><use href="#plusw"/></svg><i class="dd m2"></i>
    </div>

    <div class="tb">
      <i class="grip"></i>
      <svg class="i"><use href="#tline"/></svg><svg class="i"><use href="#ttwo"/></svg><svg class="i d"><use href="#g6"/></svg><svg class="i d"><use href="#g7"/></svg><svg class="i d"><use href="#g8"/></svg><i class="sep s5"></i>
      <svg class="i"><use href="#north"/></svg><svg class="i"><use href="#addt"/></svg><svg class="i d"><use href="#dia"/></svg><svg class="i"><use href="#calc"/></svg>
      <i class="dd m20"></i><i class="grip m2"></i>
      <svg class="i d m3"><use href="#zb1"/></svg><svg class="i d"><use href="#zb2"/></svg><svg class="i d"><use href="#zb3"/></svg><svg class="i d"><use href="#zb4"/></svg><svg class="i d"><use href="#zb5"/></svg><i class="sep"></i>
      <svg class="i d"><use href="#zb6"/></svg><svg class="i d"><use href="#zb6"/></svg><i class="sep"></i>
      <svg class="i d"><use href="#zb7"/></svg><svg class="i d"><use href="#zb8"/></svg>
      <i class="dd m47"></i><i class="grip m3"></i>
      <svg class="i d m2"><use href="#eb1"/></svg><svg class="i"><use href="#ecurve"/></svg><svg class="i d"><use href="#e3"/></svg><svg class="i d"><use href="#e4"/></svg><svg class="i"><use href="#eline"/></svg><i class="sep"></i>
      <svg class="i d"><use href="#e5"/></svg><svg class="i"><use href="#ball"/></svg><i class="sep"></i>
      <svg class="i"><use href="#hist"/></svg><svg class="i"><use href="#redraw"/></svg><svg class="i d"><use href="#e6"/></svg><svg class="i d"><use href="#e7"/></svg><svg class="i d"><use href="#e8"/></svg><i class="sep"></i>
      <svg class="i d"><use href="#e9"/></svg><svg class="i d"><use href="#e10"/></svg><i class="dd m2"></i><i class="grip m4"></i>
      <svg class="i m1"><use href="#b1"/></svg><svg class="i"><use href="#b2"/></svg><svg class="i"><use href="#b3"/></svg><svg class="i"><use href="#b4"/></svg><svg class="i"><use href="#b5"/></svg><svg class="i"><use href="#b6"/></svg><i class="sep"></i>
      <svg class="i"><use href="#b7"/></svg><i class="dd m1"></i><i class="grip m3"></i>
      <svg class="i m1"><use href="#stack"/></svg><i class="sep"></i>
      <svg class="i"><use href="#nodes"/></svg><i class="caret"></i><i class="sep"></i>
      <svg class="i d"><use href="#g9"/></svg><svg class="i d"><use href="#g10"/></svg><svg class="i d"><use href="#g11"/></svg><svg class="i d"><use href="#g12"/></svg><i class="sep"></i>
      <svg class="i m2"><use href="#rnodes"/></svg><svg class="i d"><use href="#e8"/></svg><i class="sep"></i>
      <svg class="i d"><use href="#g13"/></svg><svg class="i d"><use href="#g14"/></svg><i class="sep"></i>
      <svg class="i d"><use href="#g15"/></svg><svg class="i d"><use href="#g16"/></svg><i class="dd m2"></i>
    </div>

    <main class="work">
      <aside class="lefttab">
        <div class="vtab"><svg class="vico"><use href="#results"/></svg><span class="vt">Results</span></div>
      </aside>

      <section class="toc">
        <div class="toc-head"><span>Table Of Contents</span><svg class="toc-pin"><use href="#pin"/></svg><span class="toc-x">&#10005;</span></div>
        <div class="toc-tools">
          <svg class="i"><use href="#tocsel"/></svg><svg class="i a"><use href="#tocdb"/></svg><svg class="i"><use href="#toclay"/></svg><svg class="i"><use href="#tocvis"/></svg><i class="sep"></i><svg class="i"><use href="#toclist"/></svg>
        </div>
        <div class="tree">
          <div class="rows">
            <div class="r r0"><i class="exp"></i><svg class="ri"><use href="#layers"/></svg><b class="lyr">Layers</b></div>
            <div class="r r1"><i class="exp"></i><svg class="ri"><use href="#db"/></svg><span class="clip">C:\Users\RFAIRHUR\Documents\ArcGIS</span></div>
            <div class="r r2"><i class="exp"></i><i class="chk">&#10003;</i><span class="clip">TEST_HALF_BUFFERS_CLIP</span></div>
            <div class="r r3"><i class="leg"></i></div>
            <div class="r r2"><i class="exp"></i><i class="chk">&#10003;</i><span class="clip">TEST_HALF_BUFFERS_CITY</span></div>
            <div class="r r4">CITYNAME</div>
            <div class="r r3"><i class="sw c1"></i>BANNING</div>
            <div class="r r3"><i class="sw c2"></i>BEAUMONT</div>
            <div class="r r3"><i class="sw c3"></i>BLYTHE</div>
            <div class="r r3"><i class="sw c4"></i>CALIMESA</div>
            <div class="r r3"><i class="sw c5"></i>CANYON LAKE</div>
            <div class="r r3"><i class="sw c6"></i>CATHEDRAL CITY</div>
            <div class="r r3"><i class="sw c7"></i>COACHELLA</div>
            <div class="r r3"><i class="sw c8"></i>CORONA</div>
            <div class="r r3"><i class="sw c9"></i><span class="clip">DESERT HOT SPRINGS</span></div>
            <div class="r r3"><i class="sw c10"></i>EASTVALE</div>
            <div class="r r3"><i class="sw c11"></i>HEMET</div>
            <div class="r r3"><i class="sw c12"></i>INDIAN WELLS</div>
          </div>
          <div class="sbar"><span class="sb-up"></span><span class="sb-th"></span></div>
        </div>
      </section>

      <section class="map">
        <svg class="mapsvg" viewBox="244 167 1118 624">
          <polygon class="outer" points="886,160 885.7,168.3 895,231.700 903.300,235.700 970,226.700 1001.700,259.300 988.300,247.700 961.700,277.700 974.300,289 965,297.300 956.700,285.700 939,315 959.300,328.300 885,340.700 868.300,348.300 850,347.700 840,343.300 790,340.700 745,345.700 744,348.300 678.300,364 673.300,369.300 620,380 600,366.700 583.300,356.700 566.700,359.300 546.700,341.700 533.300,335 525,326.700 513.300,322.700 490,283.300 470,286.700 451.700,295 438.300,305 430,316.700 415,354 428.300,381.700 411.700,401.700 392.700,425 386.700,448.300 410,463.300 400,486.700 381.700,494 406.700,528.300 440,518.300 480,501.700 493.300,490 535,451.700 534.300,505 671.700,538.300 672.700,653.300 714.300,655 801.700,655 801.700,686.700 830,688.300 909.300,689.300 909.300,656.700 988.300,658.300 980.700,709.300 1085,800 1370,800 1370,160"/>
          <polygon class="inner" points="896,160 896.700,168.300 903.300,220 911,224.300 970.700,216.700 1016,259 1001.700,273.300 989.300,261.700 975,276.700 994,296 976.700,298.300 970,306 964.300,297.300 958.300,300 952.700,311.700 985,333.300 920,345 919.300,349 898.300,348.300 880,354.300 863.300,356.700 840,353.300 790,350 766.700,351.700 746.700,358.300 733.300,360.700 732.700,358.300 678.300,378.300 671.700,381.700 626.700,388.300 606.700,394.300 572.300,392.700 580,386.700 600,378.300 583.300,366.700 570,369.300 562.700,366.700 540,346.700 528.300,341.700 518.300,333.300 510,335 505,326.700 485,294 466.700,298.300 451.700,306.700 440,320 426.700,352.700 439,383.300 420,400 400,431.700 395,445 421,458.300 406.700,495 397.300,498.300 412.700,519.300 428.300,511.700 470,495 493.300,475 535,438.300 543.300,438.300 544.300,498.300 681.700,531.700 682.700,643.300 715,645 811.700,645.700 811.700,678.300 860,679.300 899.300,679.300 900.700,646.700 981.700,648.300 979.300,607.300 1005.700,613.300 991.700,706 1092,800 1370,800 1370,160"/>
          <polygon class="pocket" points="863.300,356.700 880,354.300 912.700,366.700 920,370.700 1086.700,402.300 1080,410.700 1088.300,418.300 1116.700,423.300 1118.300,418.300 1123.300,418.300 1123.300,426 1141.700,435.700 1138.300,440 1141.700,443.300 1043.300,549 1035,533.300 1061,503.300 1022.700,470 997.300,496.700 1003.300,508.300 1018.300,518.300 1026,541.700 1021.700,546.700 1034.300,558.300 1010,581.700 1010,578 1016.700,558.300 1010,553.300 1005,530 996.700,516.700 971.700,490 961.700,470 973.300,460 975,451.700 960,421.700 923.300,394.300 930,382.300 905,373.300"/>
          <g class="ink">
            <path d="M596 303L525 317M532 301L525 317L545 324"/>
            <path d="M502 331L300 540"/>
            <path d="M1233 552L948 389M968 390L948 389L953 407"/>
            <path d="M1030.700 621.700L1005 646M1009.300 626L1005 646L1022.700 657.700"/>
          </g>
        </svg>
        <div class="note note1">
          <div>There is a smal divot in the buffer due to a densified curve and</div>
          <div>sharp angle change occuring next to each other.  This is the</div>
          <div>geometry Esri's offset method creates in that situation.</div>
        </div>
        <div class="note note2">
          <div>The opening of these pockets narrowed to</div>
          <div>less than 600 feet, which prevented the</div>
          <div>buffer from being correctly formed as the</div>
          <div>pocket widened to show a hole in the</div>
          <div>buffer.</div>
          <div>A second treatment of just the pocket</div>
          <div>portion that is wider than 600 feet would</div>
          <div>be required to create a hole and a real 300</div>
          <div>foot wide buffer</div>
        </div>
      </section>

      <aside class="righttabs">
        <div class="rtab rt1"><svg class="vico"><use href="#sprops"/></svg><span class="vt">Edit Sketch Properties</span></div>
        <div class="rtab rt2"><span class="vt">Snapping Environment</span></div>
        <div class="rtab rt3"><svg class="vico"><use href="#identw"/></svg><span class="vt">Identify</span></div>
        <div class="rtab rt4"><svg class="vico"><use href="#table"/></svg><span class="vt">Attributes</span></div>
        <div class="rtab rt5"><svg class="vico"><use href="#create"/></svg><span class="vt">Create Features</span></div>
        <div class="rtab rt6"><svg class="vico"><use href="#catalog"/></svg></div>
      </aside>
    </main>

    <footer class="status">6142213.29  2264302.938 Feet</footer>

    <div class="taskbar">
      <i class="tray-up"></i>
      <svg class="tr"><use href="#flag"/></svg>
      <svg class="tr"><use href="#net"/></svg>
      <svg class="tr"><use href="#spk"/></svg>
      <div class="clock"><div>1:02 PM</div><div>3/27/2015</div></div>
      <i class="showdesk"></i>
    </div>
  </div>

  <div class="inset">
    <svg class="insetsvg" viewBox="10 534 480 321">
      <path class="i-olive" d="M18.300 534L136.700 534L160 571.700L180 598.300L196.700 628.300L203.300 645L126.700 690C150 676 185 667 220 665.700S280 672 316.700 688.300S376 728 396.700 751.700L423.300 776.700L490 810V855H358.300L163.300 783.300L106.700 678.300Z"/>
      <path class="i-edge" d="M136.700 534L160 571.700L180 598.300L196.700 628.300L203.300 645L126.700 690C150 676 185 667 220 665.700S280 672 316.700 688.300S376 728 396.700 751.700L423.300 776.700L490 810"/>
      <path class="i-gray" d="M18.300 534L106.700 678.300L163.300 783.300L173.300 778.300C190 769 210 764 226.700 764.300C250 765 275 778 293.300 790L325 818.300L358.300 855H10V534Z"/>
      <polyline class="i-cyan" points="18.300,534 106.700,678.300 163.300,783.300 173.300,778.300"/>
      <polyline class="i-cyan" points="325,818.300 358.300,855"/>
      <polyline class="i-mag" points="18.300,534 106.700,678.300 163.300,783.300 173.300,778.300"/>
      <polyline class="i-mag" points="325,818.300 358.300,855"/>
      <path class="i-green" d="M173.300 778.300C190 769 210 764 226.700 764.300C250 765 275 778 293.300 790L325 818.300"/>
      <rect class="i-sq" x="104" y="675.500" width="6" height="5"/>
      <rect class="i-sq" x="161" y="781" width="5" height="5"/>
      <g class="ink">
        <path d="M325 514L210 634M215 598L210 634L255 623"/>
      </g>
    </svg>
  </div>
</div>
</body>
</html>
```

FILE: styles.css
```css
* { box-sizing: border-box; }
html, body { margin: 0; padding: 0; }
body { width: 1440px; height: 860px; overflow: hidden; font-family: "Noto Sans", "Open Sans", sans-serif; font-size: 12px; color: #000; }
i { font-style: normal; }
.sprite { display: none; }

.desk { position: relative; width: 1440px; height: 860px; background: #3a6ea5; overflow: hidden; }

/* Citrix receiver bar */
.citrix { height: 21px; display: flex; align-items: center; padding-left: 1px; background: linear-gradient(90deg, #c9d4e0 0, #c4d2e2 150px, #8aa6c8 205px, #5b82b5 240px, #2a5b9e 300px, #25589b 1290px, #6688b4 1320px, #25589b 1340px); border-bottom: 1px solid #b8c8da; }
.tico { width: 16px; height: 16px; flex: none; }
.citrix-t { margin-left: 4px; font-family: "Open Sans", sans-serif; font-size: 11.700px; color: #16202e; }
.citrix-btns { margin-left: auto; margin-right: 3px; display: flex; align-self: flex-start; height: 17px; border: 1px solid #44688f; border-top: 0; border-radius: 0 0 4px 4px; }
.cb { width: 28px; display: flex; align-items: center; justify-content: center; background: linear-gradient(#6c8db8, #4d76aa 55%, #3f6aa2); border-right: 1px solid #8ea9c9; }
.cb-min { width: 11px; height: 4px; background: #eef3f8; border: 1px solid #6a7f99; margin-top: 4px; }
.cb-max { width: 10px; height: 10px; border: 2px solid #e8eef4; box-shadow: 2px -2px 0 -1px #c8d4e2; }
.cb-close { width: 47px; border-right: 0; color: #fff; font-weight: 700; font-size: 14px; background: linear-gradient(#d68878, #bb4a38 50%, #a03a2c); }

/* Remote desktop frame */
.rdp { width: 1387px; height: 836px; display: flex; flex-direction: column; background: #fff; border-right: 3px solid #c8c6c0; border-bottom: 3px solid #c8c6c0; box-shadow: 1px 1px 0 #444; }
.rdp-bar { height: 20px; flex: none; display: flex; align-items: center; padding-left: 2px; background: linear-gradient(90deg, #0b2a6c 0, #1a3d80 300px, #5f88bc 900px, #a6caf0 1300px); border-bottom: 1px solid #d4d0c8; }
.rdp-t { margin-left: 2px; font-family: "Open Sans", sans-serif; font-weight: 700; font-size: 11.500px; color: #fff; }
.rdp-btns { margin-left: auto; margin-right: 2px; display: flex; gap: 1px; }
.rb { width: 16px; height: 14px; display: flex; align-items: center; justify-content: center; background: #d4d0c8; border: 1px solid; border-color: #fff #404040 #404040 #fff; font-size: 9px; font-weight: 700; color: #000; }
.rb-x { margin-left: 1px; }
.rb-min { width: 6px; height: 2px; background: #000; margin-top: 6px; margin-right: 1px; }
.rb-max { width: 8px; height: 7px; border: 1px solid #000; border-top-width: 2px; box-shadow: 2px -2px 0 -1px #000; }

.arc-bar { height: 21px; flex: none; display: flex; align-items: center; padding-left: 2px; background: linear-gradient(#a6c0dc, #bcd2e8 55%, #d0e0f2); }
.arc-ico { width: 17px; height: 17px; }
.arc-t { margin-left: 7px; font-family: "Open Sans", sans-serif; font-size: 12px; color: #252a30; }
.arc-btns { margin-left: auto; margin-right: 3px; display: flex; gap: 3px; }
.ab { width: 30px; height: 16px; display: flex; align-items: center; justify-content: center; border: 1px solid #6e85a2; border-radius: 3px; background: linear-gradient(#dbe7f4, #b4c9e2 50%, #9db5d3); color: #fff; font-size: 11px; font-weight: 700; }
.ab-x { background: linear-gradient(#e6a293, #c8503f 50%, #b84232); border-color: #8a4a42; }
.ab-min { width: 11px; height: 4px; background: #eef3f8; border: 1px solid #55677e; margin-top: 5px; }
.ab-max { width: 8px; height: 7px; border: 1px solid #39495c; box-shadow: 3px -3px 0 -1px #eef3f8, 3px -3px 0 0 #39495c; background: #eef3f8; margin: 2px 3px 0 0; }

/* Menu + toolbars */
.menu { height: 25px; flex: none; display: flex; gap: 16px; align-items: center; padding: 2px 0 0 12px; background: #fdfbfd; font-family: "Noto Sans", sans-serif; font-size: 11px; letter-spacing: .1px; }
.tb { height: 26px; flex: none; display: flex; align-items: center; padding-left: 4px; background: linear-gradient(#fff, #faf8fb); font-size: 12px; white-space: nowrap; }
.grip { width: 6px; height: 20px; flex: none; background: repeating-linear-gradient(#9a9a9a 0 2px, transparent 2px 4px) 2px 0 / 2px 100% no-repeat; }
.i { width: 22px; height: 17px; flex: none; }
.d { opacity: .42; filter: grayscale(1); }
.a { width: 16px; margin: 0 3px; background: #dcecfc; box-shadow: 0 0 0 2px #dcecfc, 0 0 0 3px #3f97f0; }
.sep { width: 6px; height: 20px; flex: none; background: linear-gradient(#b8b8b8, #b8b8b8) center / 1px 100% no-repeat; }
.s5 { width: 5px; }
.s4 { width: 4px; }
.caret { width: 9px; height: 4px; flex: none; display: inline-block; background: #000; clip-path: polygon(10% 0, 90% 0, 50% 100%); }
.caret.g { background: #aab; }
.dd { width: 11px; height: 26px; flex: none; position: relative; background: linear-gradient(#fbfbfb, #e0e0e0 40%, #9a9a9a); }
.dd::after { content: ""; position: absolute; left: 2px; bottom: 4px; width: 7px; height: 6px; background: linear-gradient(#111 0 1px, transparent 1px 2px, #111 2px); clip-path: polygon(0 0, 100% 0, 100% 40%, 50% 100%, 0 40%); }
.m1 { margin-left: 1px; }
.m2 { margin-left: 2px; }
.m3 { margin-left: 3px; }
.m4 { margin-left: 4px; }
.m5 { margin-left: 5px; }
.m20 { margin-left: 20px; }
.m47 { margin-left: 47px; }
.a.m1 { margin-left: 4px; margin-right: 2px; }
.a.m2 { margin-left: 5px; margin-right: 3px; }
.combo { height: 20px; flex: none; display: flex; align-items: center; position: relative; border: 1px solid #bdbdbd; border-radius: 3px; font-family: "Noto Sans", sans-serif; font-size: 11px; }
.scale { width: 146px; padding-left: 2px; background: #fff; }
.sel { width: 171px; padding-left: 4px; background: linear-gradient(#fff, #e4e4e6); border-color: #8a8a8a #cfcfcf #cfcfcf #8a8a8a; }
.cdrop { position: absolute; right: 2px; top: 6px; width: 10px; height: 6px; background: #000; clip-path: polygon(0 0, 100% 0, 50% 100%); }
.tb-text { display: flex; align-items: center; flex: none; height: 20px; font-family: "Noto Sans", sans-serif; font-size: 11.500px; }
.editor { width: 47px; padding-left: 5px; }
.spatial { width: 113px; margin-left: 6px; }
.tb-text .caret { width: 7px; margin-left: 2px; }

/* Work area */
.work { flex: 1; min-height: 0; display: flex; background: #fff; border-top: 1px solid #9a9a9a; }
.lefttab { width: 22px; flex: none; padding-top: 3px; background: #fff; }
.vtab { width: 20px; height: 66px; display: flex; flex-direction: column; align-items: center; padding-top: 1px; border: 1px solid #a8a8a8; border-left: 0; border-radius: 0 0 4px 0; background: #f7f5f8; }
.vico { width: 16px; height: 16px; flex: none; }
.vt { writing-mode: vertical-rl; font-family: "Liberation Sans", sans-serif; font-size: 12px; color: #5a5a5a; letter-spacing: .2px; white-space: nowrap; margin-top: 6px; line-height: 16px; }

.toc { width: 218px; flex: none; display: flex; flex-direction: column; min-height: 0; overflow: hidden; }
.toc-head { height: 20px; flex: none; display: flex; align-items: center; padding: 0 6px 0 4px; background: linear-gradient(90deg, #cddaec, #dfe8f4); color: #4e5660; font-family: "Open Sans", sans-serif; font-size: 12px; }
.toc-pin { margin-left: auto; width: 10px; height: 12px; }
.toc-x { margin-left: 7px; font-weight: 700; font-size: 11px; color: #333; }
.toc-tools { height: 25px; flex: none; display: flex; align-items: center; padding-left: 3px; background: #fbfafc; }
.toc-tools .sep { width: 6px; }
.tree { flex: 1; min-height: 0; display: flex; width: 214px; border: 1px solid #8a8a8a; border-bottom: 0; background: #fff; }
.rows { flex: 1; min-width: 0; padding-top: 1px; }
.r { height: 18px; display: flex; align-items: center; white-space: nowrap; overflow: hidden; font-family: "Noto Sans", sans-serif; font-size: 11.700px; color: #111; }
.r0 { padding-left: 8px; }
.r1 { padding-left: 27px; }
.r2 { padding-left: 46px; }
.r3 { padding-left: 78px; }
.r4 { padding-left: 101px; }
.clip { overflow: hidden; }
.exp { width: 9px; height: 9px; flex: none; border: 1px solid #8b95a5; background: linear-gradient(#e4e4e4, #e4e4e4) center / 5px 1px no-repeat #fff; }
.ri { width: 16px; height: 16px; flex: none; margin-left: 6px; }
.r1 .ri { margin-left: 7px; width: 14px; }
.lyr { margin-left: 3px; margin-top: 1px; width: 39px; flex: none; padding: 0 2px; height: 17px; line-height: 17px; background: #3399ff; color: #fff; font-family: "Open Sans", sans-serif; font-weight: 700; font-size: 11px; }
.r1 .clip { margin-left: 6px; }
.r2 .exp, .r1 .exp, .r0 .exp { background: linear-gradient(#5a6a80, #5a6a80) center / 5px 1px no-repeat #f4f4f4; }
.chk { width: 13px; height: 13px; flex: none; margin-left: 7px; border: 1px solid #333; background: #fff; font-family: "DejaVu Sans", sans-serif; font-size: 12px; font-weight: 700; line-height: 11px; text-align: center; }
.r2 .clip { margin-left: 6px; }
.leg { width: 14px; height: 1px; background: #a0004f; }
.sw { width: 15px; height: 11px; flex: none; margin-right: 3px; border: 1px solid #777; }
.c1 { background: #b03070; }
.c2 { background: #2ca02c; }
.c3 { background: #3a96b0; }
.c4 { background: #996020; }
.c5 { background: #2a2ad0; }
.c6 { background: #2a50a8; }
.c7 { background: #c02a2a; }
.c8 { background: #adb82a; }
.c9 { background: #28c8a0; }
.c10 { background: #a040c8; }
.c11 { background: #a03848; }
.c12 { background: #6a9a30; }
.sbar { width: 16px; flex: none; display: flex; flex-direction: column; background: #f0f0f0; }
.sb-up { height: 18px; flex: none; position: relative; background: #fbfbfb; }
.sb-up::after { content: ""; position: absolute; left: 4px; top: 7px; width: 7px; height: 4px; background: #222; clip-path: polygon(50% 0, 100% 100%, 0 100%); }
.sb-th { flex: 1; border: 1px solid #a8a8a8; border-radius: 2px; background: linear-gradient(90deg, #f4f4f4, #fff 30%, #ccc 70%, #dcdcdc); }

.map { flex: 1; min-width: 0; margin-left: 4px; position: relative; background: #f7ffff; border-left: 1px solid #9a9a9a; overflow: hidden; }
.mapsvg { position: absolute; left: 0; top: 0; width: 1118px; height: 624px; display: block; }
.outer { fill: #adb82e; stroke: #777; stroke-width: 1; }
.inner { fill: #e6e6e6; stroke: #a5004f; stroke-width: 1; }
.pocket { fill: #adb82e; stroke: #a5004f; stroke-width: 1; }
.ink path { fill: none; stroke: #000; stroke-width: 4.500; stroke-linecap: round; stroke-linejoin: round; }
.note { position: absolute; font-family: Lato, sans-serif; font-weight: 700; font-size: 15.500px; line-height: 19px; color: #060a18; }
.note div { white-space: pre; }
.note1 { left: 283px; top: 74px; }
.note2 { left: 793px; top: 392px; }

.righttabs { width: 23px; flex: none; display: flex; flex-direction: column; background: #fff; }
.rtab { display: flex; flex-direction: column; align-items: center; width: 20px; margin-left: 2px; border: 1px solid #a8a8a8; border-right: 0; border-top: 0; border-radius: 0 0 0 4px; background: #f7f5f8; }
.rtab .vt { margin-top: 4px; }
.rt1 { height: 152px; margin-top: 0; padding-top: 4px; }
.rt2 { height: 136px; margin-top: 12px; border-top: 1px solid #a8a8a8; border-radius: 4px 0 0 4px; }
.rt3 { height: 66px; margin-top: 16px; border-top: 1px solid #a8a8a8; border-radius: 4px 0 0 4px; padding-top: 2px; }
.rt4 { height: 76px; margin-top: 17px; border-top: 1px solid #a8a8a8; border-radius: 4px 0 0 0; padding-top: 2px; }
.rt5 { height: 114px; margin-top: 2px; padding-top: 1px; }
.rt6 { height: 18px; margin-top: 16px; border-top: 1px solid #a8a8a8; border-radius: 4px 0 0 0; border-bottom: 0; }

.status { height: 23px; flex: none; padding: 4px 0 0 1131px; background: #f8f6f9; font-family: "Noto Sans", sans-serif; font-size: 10.800px; white-space: pre; color: #111; }
.taskbar { height: 40px; flex: none; display: flex; align-items: center; justify-content: flex-end; background: linear-gradient(90deg, #a8c6e2 0, #a5c4e0 1130px, #8ea4c0 1190px, #7f94b0 1384px); border-top: 1px solid #555; }
.tray-up { width: 9px; height: 5px; margin-right: 11px; background: #f2f4f8; clip-path: polygon(50% 0, 100% 100%, 0 100%); }
.tr { width: 16px; height: 16px; margin-right: 8px; }
.clock { width: 64px; margin: -2px 3px 0; text-align: center; font-family: "Noto Sans", sans-serif; font-size: 11.300px; line-height: 16px; color: #f1f4f8; }
.showdesk { width: 15px; height: 38px; margin-right: 1px; border: 1px solid #9aa6b6; background: linear-gradient(#4b5a6c, #7a8a9c); }

/* Zoom-in overlay pasted on the map */
.inset { position: absolute; left: 5px; top: 529px; width: 490px; height: 331px; border: 5px solid #000; background: #f7ffff; }
.insetsvg { display: block; width: 480px; height: 321px; }
.i-olive { fill: #adb82e; }
.i-gray { fill: #e6e6e6; }
.i-edge { fill: none; stroke: #777; stroke-width: 1; }
.i-cyan { fill: none; stroke: #00e6f0; stroke-width: 1.500; }
.i-mag { fill: none; stroke: #a5004f; stroke-width: .8; stroke-dasharray: 1.500 3; }
.i-green { fill: none; stroke: #008000; stroke-width: 5; }
.i-sq { fill: #008000; }
```
